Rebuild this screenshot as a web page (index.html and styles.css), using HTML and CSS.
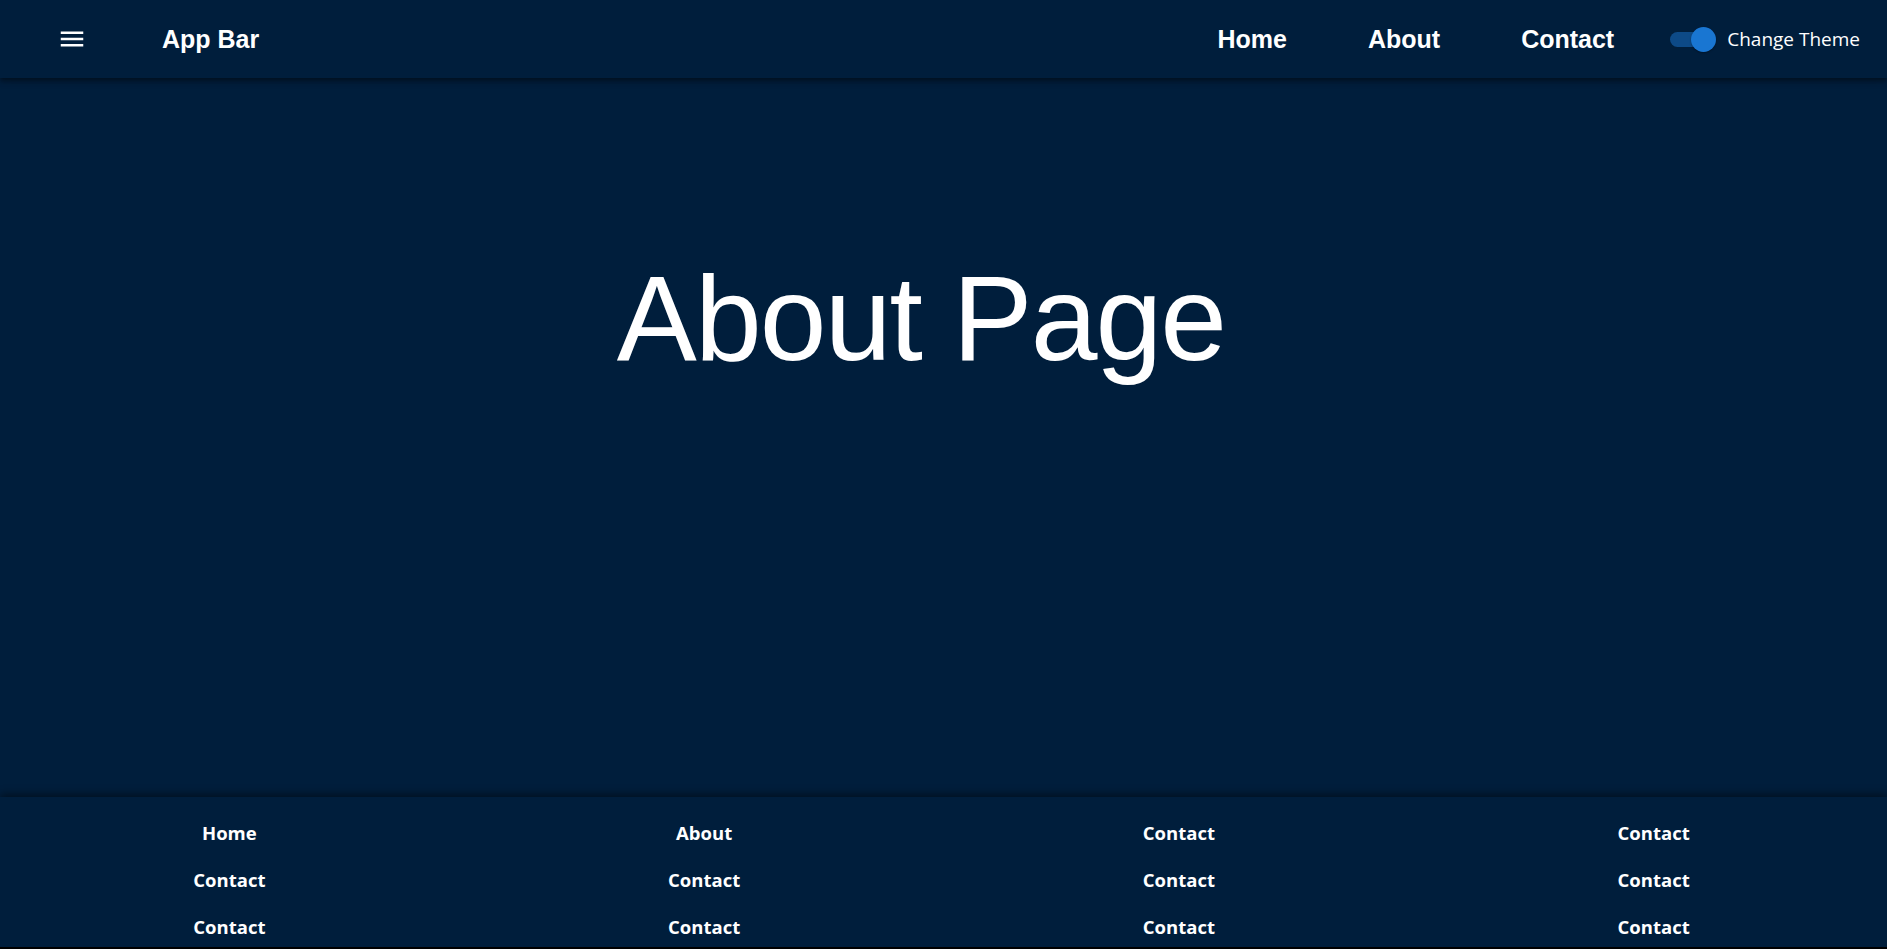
FILE: index.html
```html
<!DOCTYPE html>
<html lang="en">
<head>
<meta charset="utf-8">
<title>About Page</title>
<link rel="stylesheet" href="styles.css">
</head>
<body>
<div class="page">
  <header class="appbar">
    <span class="menu-icon" aria-label="menu">
      <svg viewBox="0 0 24 24" width="30" height="30"><path fill="#fff" d="M3 18h18v-2H3v2zm0-5h18v-2H3v2zm0-7v2h18V6H3z"/></svg>
    </span>
    <span class="brand">App Bar</span>
    <nav class="nav">
      <a class="nav-link">Home</a>
      <a class="nav-link">About</a>
      <a class="nav-link">Contact</a>
    </nav>
    <label class="theme">
      <span class="switch"><span class="track"></span><span class="thumb"></span></span>
      <span class="theme-label">Change Theme</span>
    </label>
  </header>
  <main class="main">
    <h1 class="title">About Page</h1>
  </main>
  <footer class="footer">
    <div class="grid">
      <a class="cell">Home</a>
      <a class="cell">About</a>
      <a class="cell">Contact</a>
      <a class="cell">Contact</a>
      <a class="cell">Contact</a>
      <a class="cell">Contact</a>
      <a class="cell">Contact</a>
      <a class="cell">Contact</a>
      <a class="cell">Contact</a>
      <a class="cell">Contact</a>
      <a class="cell">Contact</a>
      <a class="cell">Contact</a>
    </div>
  </footer>
</div>
</body>
</html>
```
FILE: styles.css
```css
html, body {
  margin: 0;
  padding: 0;
  background: #000;
  overflow: hidden;
}
.page {
  height: 947px;
  display: flex;
  flex-direction: column;
  background: #001e3c;
  color: #fff;
}
.appbar {
  position: relative;
  z-index: 2;
  height: 78px;
  flex: none;
  display: flex;
  align-items: center;
  padding: 0 27px 0 57px;
  background: #001e3c;
  box-shadow: 0 2px 4px -1px rgba(0,0,0,0.3), 0 4px 5px 0 rgba(0,0,0,0.2), 0 1px 10px 0 rgba(0,0,0,0.18);
  font-family: "Liberation Sans", Arial, sans-serif;
}
.menu-icon {
  display: flex;
  width: 30px;
  height: 30px;
}
.brand {
  margin-left: 75px;
  font-size: 25px;
  font-weight: 700;
}
.nav {
  margin-left: auto;
  display: flex;
  gap: 81px;
}
.nav-link {
  font-size: 25px;
  font-weight: 700;
  color: #fff;
}
.theme {
  margin-left: 56px;
  display: flex;
  align-items: center;
  gap: 11px;
}
.switch {
  position: relative;
  width: 46px;
  height: 25px;
  display: block;
}
.track {
  position: absolute;
  left: 0;
  top: 5px;
  width: 42px;
  height: 15px;
  border-radius: 8px;
  background: #0d4a87;
}
.thumb {
  position: absolute;
  left: 21px;
  top: 0;
  width: 25px;
  height: 25px;
  border-radius: 50%;
  background: #1976d2;
  box-shadow: 0 1px 2px rgba(0,0,0,0.3);
}
.theme-label {
  font-family: "Open Sans", "Noto Sans", sans-serif;
  font-size: 19px;
  color: #fff;
}
.main {
  flex: 1;
  padding: 170px 45px 0 0;
}
.title {
  margin: 0;
  text-align: center;
  font-family: "Liberation Sans", Arial, sans-serif;
  font-weight: 400;
  font-size: 120px;
  line-height: 140px;
  letter-spacing: -1.875px;
}
.footer {
  position: relative;
  z-index: 2;
  height: 150px;
  flex: none;
  padding-top: 12px;
  box-sizing: border-box;
  background: #001e3c;
  box-shadow: 0 -3px 8px rgba(0,0,0,0.45);
  overflow: hidden;
}
.grid {
  display: grid;
  grid-template-columns: repeat(4, 1fr);
  grid-auto-rows: 47px;
  margin: 0 -4px 0 -8px;
}
.cell {
  text-align: center;
  font-family: "Open Sans", "Noto Sans", sans-serif;
  font-weight: 700;
  font-size: 18.5px;
  line-height: 47px;
  color: #fff;
}
```
